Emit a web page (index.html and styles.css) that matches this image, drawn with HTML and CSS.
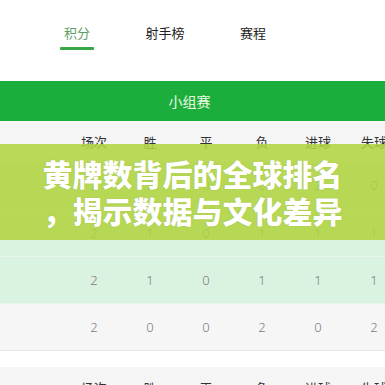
FILE: index.html
```html
<!DOCTYPE html>
<html lang="zh">
<head>
<meta charset="utf-8">
<link rel="stylesheet" href="styles.css">
</head>
<body>
<div class="page">
  <nav class="tabs">
    <div class="tab active"><span class="tab-label">积分</span><span class="tab-line"></span></div>
    <div class="tab"><span class="tab-label">射手榜</span></div>
    <div class="tab"><span class="tab-label">赛程</span></div>
  </nav>
  <div class="group-bar">小组赛</div>
  <div class="board">
    <table class="standings">
      <thead>
        <tr class="head"><th class="team"></th><th>场次</th><th>胜</th><th>平</th><th>负</th><th>进球</th><th>失球</th><th>净胜球</th><th>积分</th></tr>
      </thead>
      <tbody>
        <tr class="row qual"><td class="team"></td><td>2</td><td>2</td><td>0</td><td>0</td><td>2</td><td>0</td><td>2</td><td>6</td></tr>
        <tr class="row qual"><td class="team"></td><td>2</td><td>1</td><td>0</td><td>1</td><td>1</td><td>1</td><td>0</td><td>3</td></tr>
        <tr class="row qual"><td class="team"></td><td>2</td><td>1</td><td>0</td><td>1</td><td>1</td><td>1</td><td>0</td><td>3</td></tr>
        <tr class="row out"><td class="team"></td><td>2</td><td>0</td><td>0</td><td>2</td><td>0</td><td>2</td><td>-2</td><td>0</td></tr>
      </tbody>
    </table>
    <div class="banner">
      <p class="banner-text"><span class="banner-line">黄牌数背后的全球排名</span><span class="banner-line">，揭示数据与文化差异</span></p>
    </div>
  </div>
  <table class="standings second">
    <thead>
      <tr class="head"><th class="team"></th><th>场次</th><th>胜</th><th>平</th><th>负</th><th>进球</th><th>失球</th><th>净胜球</th><th>积分</th></tr>
    </thead>
  </table>
</div>
</body>
</html>
```

FILE: styles.css
```css
html, body {
  margin: 0;
  padding: 0;
  background: #ffffff;
  overflow: hidden;
}

body {
  font-family: "Noto Sans CJK SC", "Noto Sans", sans-serif;
  color: #333333;
}

.page {
  width: 385px;
  height: 385px;
  overflow: hidden;
}

.tabs {
  display: flex;
  height: 81px;
  padding-left: 33px;
  box-sizing: border-box;
}

.tab {
  width: 88px;
  display: flex;
  flex-direction: column;
  align-items: center;
  padding-top: 20px;
}

.tab-label {
  font-size: 13px;
  line-height: 26px;
  color: #222222;
}

.tab.active .tab-label {
  color: #5e9e62;
}

.tab-line {
  width: 34px;
  height: 3px;
  margin-top: 1px;
  background: #37a647;
  border-radius: 1px;
}

.group-bar {
  height: 40px;
  background: #1cae3c;
  color: #ecfae2;
  font-size: 14px;
  line-height: 40px;
  text-align: center;
  padding-right: 6px;
}

.board {
  position: relative;
}

.standings {
  border-collapse: collapse;
  table-layout: fixed;
  width: 514px;
}

.standings th,
.standings td {
  width: 56px;
  padding: 0;
  text-align: center;
  font-weight: normal;
}

.standings .team {
  width: 66px;
}

.head {
  height: 41px;
  background: #f5f5f5;
}

.head th {
  font-size: 13px;
  color: #333333;
  line-height: 41px;
}

.row {
  height: 47px;
}

.row td {
  font-size: 13px;
  color: #7a7a7a;
  font-family: "Noto Sans", "Noto Sans CJK SC", sans-serif;
  font-weight: 300;
}

.row.qual {
  background: #daf2e0;
  border-bottom: 1px solid #e6f6ea;
}

.row.out {
  background: #f6f6f6;
  border-bottom: 1px solid #e6e6e6;
}

.second {
  margin-top: 16px;
}

.banner {
  position: absolute;
  left: 0;
  top: 23px;
  width: 385px;
  height: 96px;
  background: rgba(176, 212, 62, 0.86);
  display: flex;
  align-items: center;
  justify-content: center;
}

.banner-text {
  margin: 0;
  font-size: 30px;
  line-height: 37px;
  font-weight: 900;
  color: #ffffff;
  text-shadow: 0 0 1px rgba(120, 150, 40, 0.6);
  white-space: nowrap;
}

.banner-line {
  display: block;
}
```
